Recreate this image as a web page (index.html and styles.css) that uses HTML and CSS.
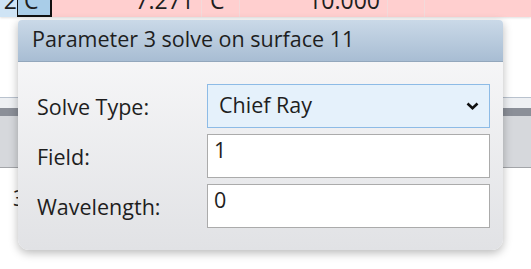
FILE: index.html
```html
<!DOCTYPE html>
<html lang="en">

<head>
    <meta charset="UTF-8">
    <meta name="viewport" content="width=device-width, initial-scale=1.0">
    <title>Solve</title>
    <link rel="stylesheet" href="styles.css">
</head>

<body>
    <!-- Editor behind the dialog -->
    <div class="sheet">
        <div class="grid-row">
            <div class="cell cell-num"><span>2</span></div>
            <div class="cell cell-sel"><span>C</span></div>
            <div class="cell cell-val w-150"><span>7.271</span></div>
            <div class="cell cell-solve w-38"><span>C</span></div>
            <div class="cell cell-val w-148"><span>10.000</span></div>
            <div class="cell w-37"></div>
            <div class="cell cell-fill"></div>
        </div>
        <div class="pane"></div>
        <div class="toolbar">
            <div class="toolbar-top"></div>
            <div class="toolbar-dark"></div>
            <div class="toolbar-body"></div>
        </div>
        <div class="rows">
            <div class="row-num">3</div>
        </div>
    </div>

    <!-- Solve dialog -->
    <div class="dialog">
        <div class="dialog-title">Parameter 3 solve on surface 11</div>
        <div class="dialog-body">
            <label>Solve Type:</label>
            <div class="field field-select">
                <span>Chief Ray</span>
                <svg class="chevron" width="13" height="8" viewBox="0 0 13 8">
                    <polyline points="1.5,1.5 6.5,6.2 11.5,1.5" fill="none" stroke="#111" stroke-width="2.6" />
                </svg>
            </div>

            <label>Field:</label>
            <div class="field"><span>1</span></div>

            <label>Wavelength:</label>
            <div class="field"><span>0</span></div>
        </div>
    </div>
</body>

</html>
```

FILE: styles.css
```css
/* General */
body {
    margin: 0;
    padding: 0;
    background: #fff;
    font-family: 'Open Sans', 'Noto Sans', sans-serif;
    color: #1e1e1e;
    overflow: hidden;
}

/* Editor background */
.sheet {
    width: 531px;
    height: 269px;
}

.grid-row {
    display: flex;
    height: 17px;
    background: #ffcfcf;
    box-shadow: 0 1px 2px rgba(0, 0, 0, 0.12);
    font-size: 23px;
}

.cell {
    height: 17px;
    overflow: hidden;
    box-sizing: border-box;
    border-right: 1px solid #f3dada;
}

.cell span {
    display: block;
    margin-top: -16px;
    line-height: 32px;
}

.cell-num {
    width: 18px;
    background: #cfe4f5;
    border-right: 1px solid #111;
    text-align: right;
    text-indent: -6px;
}

.cell-sel {
    width: 34px;
    background: #a9cde8;
    border-right: 2px solid #111;
    border-bottom: 2px solid #111;
    padding-left: 6px;
}

.cell-val {
    text-align: right;
    padding-right: 7px;
}

.cell-solve {
    padding-left: 8px;
}

.w-150 {
    width: 150px;
}

.w-38 {
    width: 38px;
}

.w-148 {
    width: 148px;
}

.w-37 {
    width: 37px;
}

.cell-fill {
    flex: 1;
    border-right: none;
}

.pane {
    height: 80px;
}

.toolbar-top {
    height: 10px;
    border-top: 1px solid #b9c2ce;
    background: #eef0f3;
}

.toolbar-dark {
    height: 8px;
    background: #8b8f98;
}

.toolbar-body {
    height: 51px;
    background: #d6d8dc;
    border-bottom: 1px solid #a3a5a9;
}

.rows {
    padding: 16px 0 0 13px;
    font-size: 21px;
}

/* Dialog */
.dialog {
    position: absolute;
    left: 18px;
    top: 20px;
    width: 485px;
    border-radius: 4px 4px 11px 11px;
    overflow: hidden;
    background: linear-gradient(#fafafb, #e1e2e5);
    box-shadow: 0 3px 10px rgba(0, 0, 0, 0.28);
}

.dialog-title {
    height: 42px;
    box-sizing: border-box;
    padding: 4px 0 0 14px;
    font-size: 21.5px;
    background: linear-gradient(#cad9e8, #a8bdd3);
    border-bottom: 1px solid #93a7bc;
}

.dialog-body {
    display: grid;
    grid-template-columns: 170px 1fr;
    row-gap: 6px;
    align-items: center;
    padding: 22px 13px 22px 19px;
}

label {
    font-size: 21.5px;
    padding-top: 1px;
}

.field {
    height: 44px;
    box-sizing: border-box;
    border: 1px solid #ababab;
    background: #fff;
    padding: 0 0 0 6px;
    font-size: 21.5px;
    line-height: 30px;
}

.field-select {
    display: flex;
    justify-content: space-between;
    align-items: center;
    background: #e5f1fb;
    border-color: #8dbbe6;
    padding-left: 11px;
    padding-bottom: 2px;
}

.chevron {
    margin: 2px 10px 0 0;
}
```
